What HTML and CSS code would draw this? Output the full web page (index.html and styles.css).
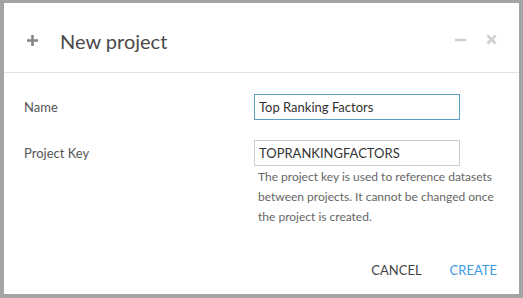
FILE: index.html
```html
<!DOCTYPE html>
<html lang="en">
<head>
  <meta charset="UTF-8">
  <title>New project</title>
  <link rel="stylesheet" href="styles.css">
</head>
<body>
  <div class="modal">
    <div class="modal-header">
      <span class="plus">
        <svg width="13" height="13" viewBox="0 0 13 13"><path d="M6.5 1v11M1 6.5h11" stroke="#858585" stroke-width="2.6"/></svg>
      </span>
      <h2>New project</h2>
      <span class="tools">
        <svg width="11" height="11" viewBox="0 0 11 11"><path d="M0 6h11" stroke="#cfcfcf" stroke-width="2.5"/></svg>
        <svg width="11" height="11" viewBox="0 0 11 11"><path d="M1.5 1.5l8 8M9.5 1.5l-8 8" stroke="#cfcfcf" stroke-width="2.5"/></svg>
      </span>
    </div>
    <div class="modal-body">
      <div class="row">
        <label for="name">Name</label>
        <input type="text" id="name" class="focused" value="Top Ranking Factors">
      </div>
      <div class="row">
        <label for="key">Project Key</label>
        <div class="field">
          <input type="text" id="key" value="TOPRANKINGFACTORS">
          <p class="help">The project key is used to reference datasets between projects. It cannot be changed once the project is created.</p>
        </div>
      </div>
    </div>
    <div class="modal-footer">
      <button class="cancel">Cancel</button>
      <button class="create">Create</button>
    </div>
  </div>
</body>
</html>
```

FILE: styles.css
```css
body {
  margin: 0;
  padding: 3px 4px 4px 4px;
  background: #a4a4a4;
  font-family: Lato, "Open Sans", sans-serif;
  height: 298px;
  box-sizing: border-box;
}
.modal {
  background: #fff;
  height: 291px;
  display: flex;
  flex-direction: column;
}
.modal-header {
  height: 69px;
  border-bottom: 1px solid #e1e1e1;
  display: flex;
  align-items: center;
  padding: 0 22px 0 22px;
}
.plus {
  display: flex;
  width: 34px;
  margin-top: 6px;
}
.modal-header h2 {
  margin: 0;
  font-weight: normal;
  font-size: 20px;
  color: #4a4a4a;
  flex: 1;
  padding-top: 6px;
}
.tools {
  display: flex;
  gap: 20px;
  margin-top: 4px;
}
.modal-body {
  padding: 21px 0 0 20px;
}
.row {
  display: flex;
  align-items: flex-start;
  margin-bottom: 20px;
}
.row label {
  width: 230px;
  font-size: 13px;
  color: #555;
  line-height: 26px;
}
input[type="text"] {
  width: 206px;
  height: 26px;
  box-sizing: border-box;
  border: 1px solid #cccccc;
  padding: 0 4px;
  font-family: Lato, "Open Sans", sans-serif;
  font-size: 13px;
  color: #333;
  margin: 0;
}
input.focused {
  border-color: #5b9dc4;
}
.field {
  width: 206px;
}
.help {
  margin: 1px 0 0 4px;
  font-size: 12px;
  line-height: 20px;
  color: #666;
  width: 242px;
}
.modal-footer {
  margin-top: auto;
  display: flex;
  justify-content: flex-end;
  gap: 28px;
  padding: 0 22px 16px 0;
}
button {
  border: none;
  background: none;
  padding: 0;
  font-family: Lato, "Open Sans", sans-serif;
  font-size: 13px;
  text-transform: uppercase;
  cursor: pointer;
}
.cancel {
  color: #444;
}
.create {
  color: #3d9be0;
}
```
